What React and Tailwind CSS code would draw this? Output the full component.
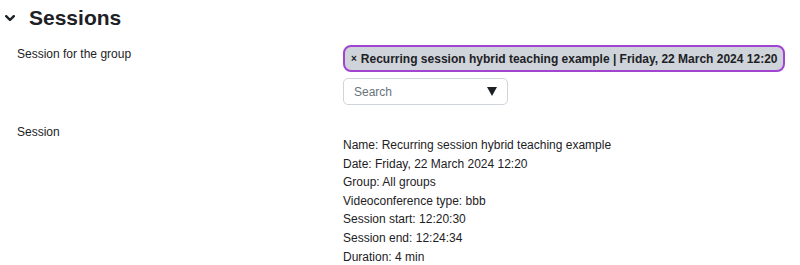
const details = [
  "Name: Recurring session hybrid teaching example",
  "Date: Friday, 22 March 2024 12:20",
  "Group: All groups",
  "Videoconference type: bbb",
  "Session start: 12:20:30",
  "Session end: 12:24:34",
  "Duration: 4 min",
];

export default function App() {
  return (
    <div className="w-[800px] h-[265px] bg-white overflow-hidden text-[#1d2125] font-['Liberation_Sans',Arial,sans-serif]">
      {/* Section header */}
      <div className="flex items-center pt-[5px] pl-[5px]">
        <svg width="10" height="7" viewBox="0 0 10 7" className="mt-[1px]">
          <path d="M1.2 1.2 L5 5 L8.8 1.2" fill="none" stroke="#1d2125" strokeWidth="2.4" strokeLinecap="round" strokeLinejoin="round" />
        </svg>
        <h3 className="ml-[14px] text-[21px] font-bold leading-[25px]">Sessions</h3>
      </div>

      {/* Session for the group */}
      <div className="flex pt-[15px]">
        <div className="w-[343px] shrink-0 pl-[17px] text-[12px] leading-[18px]">Session for the group</div>
        <div className="flex flex-col items-start">
          <span className="flex items-center h-[27px] px-[6px] rounded-[8px] border-2 border-[#a144d0] bg-[#ced4da] text-[12px] font-bold whitespace-nowrap">
            <span className="text-[10px] mr-[4px]">×</span>
            Recurring session hybrid teaching example | Friday, 22 March 2024 12:20
          </span>
          <div className="mt-[6px] flex items-center justify-between w-[165px] h-[27px] border border-[#ced4da] rounded-[5px] pl-[10px] pr-[10px]">
            <span className="text-[12px] text-[#6a737b]">Search</span>
            <svg width="10" height="9" viewBox="0 0 10 9">
              <path d="M0 0 H10 L5 9 Z" fill="#1d2125" />
            </svg>
          </div>
        </div>
      </div>

      {/* Session */}
      <div className="flex pt-[18px]">
        <div className="w-[343px] shrink-0 pl-[17px] text-[12px] leading-[18px]">Session</div>
        <div className="pt-[13px] text-[12px] leading-[18.6px]">
          {details.map((d) => (
            <div key={d}>{d}</div>
          ))}
        </div>
      </div>
    </div>
  );
}
